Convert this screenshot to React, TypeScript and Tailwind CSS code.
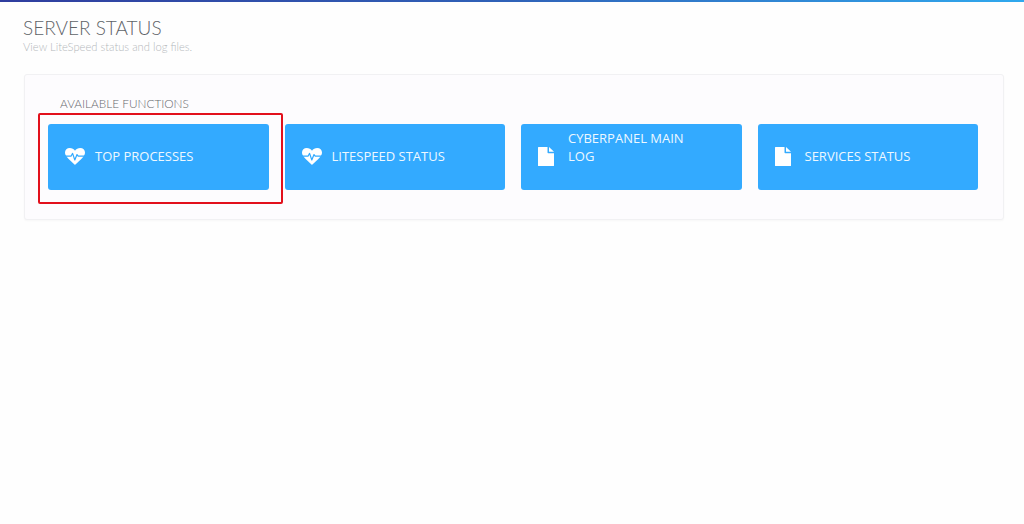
import React from "react";

function HeartIcon() {
  return (
    <svg width="20" height="17" viewBox="0 0 20 17" className="shrink-0">
      <path d="M10 17 C9.4 16.4 3.6 11.6 1.6 8.6 C0.5 7 0 5.9 0 4.6 C0 2 2 0 4.8 0 C6.9 0 8.9 1 10 2.8 C11.1 1 13.1 0 15.2 0 C18 0 20 2 20 4.6 C20 5.9 19.5 7 18.4 8.6 C16.4 11.6 10.6 16.4 10 17 Z" fill="#fff" />
      <path d="M0 8.2 H6 L7.6 5.4 L9.8 12 L12 6.6 L13.2 8.2 H20" fill="none" stroke="#33aaff" strokeWidth="1.2" strokeLinejoin="round" />
    </svg>
  );
}

function FileIcon() {
  return (
    <svg width="16" height="19" viewBox="0 0 16 19" className="shrink-0">
      <path d="M0 0.6 Q0 0 0.6 0 H9.5 V5.5 Q9.5 6.2 10.2 6.2 H16 V18.4 Q16 19 15.4 19 H0.6 Q0 19 0 18.4 Z" fill="#fff" />
      <path d="M11 0 L16 4.8 H11 Z" fill="#fff" />
    </svg>
  );
}

function Tile({ icon, label, top }: { icon: React.ReactNode; label: React.ReactNode; top?: boolean }) {
  return (
    <a className="flex h-[66px] items-center rounded-[3px] bg-[#33aaff] pl-[17px] text-[13px] leading-[18px] text-[#eef8ff]">
      <span className="mb-0.5 flex w-[30px] shrink-0 justify-start">{icon}</span>
      <span className={top ? "mb-5 w-[130px]" : "mb-0.5"}>{label}</span>
    </a>
  );
}

export default function App() {
  return (
    <div className="flex min-h-[524px] flex-col bg-[#fefefe] font-['Open_Sans',sans-serif]">
      <div className="h-0.5 w-full bg-gradient-to-r from-[#2f3d9e] via-[#2f62b8] to-[#2fa9ee]" />
      <div className="pt-[15px] pl-6">
        <h1 className="-ml-px font-['Lato',sans-serif] text-[19px] leading-[22px] font-light text-[#5f6368]">SERVER STATUS</h1>
        <p className="mt-0.5 -ml-px font-['Lato',sans-serif] text-[11.2px] leading-[11px] font-light text-[#b4b8bc]">
          View LiteSpeed status and log files.
        </p>
        <section className="relative mt-[22px] h-[146px] w-[980px] rounded-[3px] border border-[#f1f1f3] bg-[#fdfcfe] pt-[22px] pl-[23px] shadow-[0_1px_2px_rgba(0,0,0,0.03)]">
          <h2 className="pl-3 font-['Lato',sans-serif] text-[11.8px] leading-[13px] font-light text-[#66696d]">
            AVAILABLE FUNCTIONS
          </h2>
          <div className="mt-[14px] grid w-[930px] grid-cols-4 gap-4">
            <Tile icon={<HeartIcon />} label="TOP PROCESSES" />
            <Tile icon={<HeartIcon />} label="LITESPEED STATUS" />
            <Tile icon={<FileIcon />} label={<>CYBERPANEL MAIN<br />LOG</>} top />
            <Tile icon={<FileIcon />} label="SERVICES STATUS" />
          </div>
          <div className="absolute top-[38px] left-[13px] h-[91px] w-[245px] rounded-[2px] border-2 border-[#e2101c]" />
        </section>
      </div>
    </div>
  );
}
